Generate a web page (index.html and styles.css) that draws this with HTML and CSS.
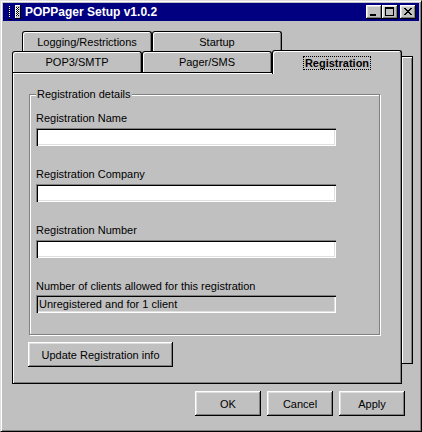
FILE: index.html
```html
<!DOCTYPE html>
<html lang="en">
<head>
  <meta charset="UTF-8" />
  <title>POPPager Setup v1.0.2</title>
  <link rel="stylesheet" href="styles.css">
</head>
<body>
  <div class="window">
    <div class="titlebar">
      <svg class="app-icon" viewBox="0 0 16 16" width="16" height="16" shape-rendering="crispEdges">
        <!-- antenna -->
        <rect x="4" y="2" width="1" height="1" fill="#fff"/>
        <rect x="4" y="3" width="1" height="1" fill="#000"/>
        <rect x="4" y="4" width="1" height="1" fill="#fff"/>
        <rect x="4" y="5" width="1" height="1" fill="#000"/>
        <rect x="4" y="6" width="1" height="1" fill="#fff"/>
        <rect x="4" y="7" width="1" height="1" fill="#000"/>
        <rect x="4" y="8" width="1" height="1" fill="#fff"/>
        <rect x="4" y="9" width="1" height="1" fill="#000"/>
        <rect x="4" y="10" width="1" height="1" fill="#fff"/>
        <rect x="4" y="11" width="1" height="1" fill="#000"/>
        <rect x="4" y="12" width="1" height="1" fill="#fff"/>
        <rect x="3" y="15" width="4" height="1" fill="#000"/>
        <!-- pager body -->
        <rect x="10" y="1" width="6" height="14" fill="#000"/>
        <rect x="10" y="1" width="5" height="13" fill="#fff"/>
        <rect x="11" y="2" width="4" height="12" fill="#c0c0c0"/>
        <rect x="11" y="3" width="3" height="9" fill="#fff"/>
        <path d="M11 3h1v1h-1zM13 3h1v1h-1zM12 4h1v1h-1zM11 5h1v1h-1zM13 5h1v1h-1zM12 6h1v1h-1zM11 7h1v1h-1zM13 7h1v1h-1zM12 8h1v1h-1zM11 9h1v1h-1zM13 9h1v1h-1zM12 10h1v1h-1zM11 11h1v1h-1zM13 11h1v1h-1z" fill="#000"/>
      </svg>
      <span class="title">POPPager Setup v1.0.2</span>
      <div class="caption-btns">
        <button class="cap">
          <svg width="16" height="14" shape-rendering="crispEdges"><rect x="4" y="9" width="6" height="2" fill="#000"/></svg>
        </button>
        <button class="cap">
          <svg width="16" height="14" shape-rendering="crispEdges"><path d="M3 2h9v9H3zM4 4v6h7V4z" fill="#000" fill-rule="evenodd"/></svg>
        </button>
        <button class="cap close">
          <svg width="16" height="14" shape-rendering="crispEdges"><path transform="translate(4 3)" d="M0 0h2v1H0zM6 0h2v1H6zM1 1h2v1H1zM5 1h2v1H5zM2 2h4v1H2zM3 3h2v1H3zM2 4h4v1H2zM1 5h2v1H1zM5 5h2v1H5zM0 6h2v1H0zM6 6h2v1H6z" fill="#000"/></svg>
        </button>
      </div>
    </div>

    <div class="dialog">
      <div class="sheet">
        <div class="sheet-main">
          <div class="tab-row back">
            <div class="tab">Logging/Restrictions</div>
            <div class="tab">Startup</div>
          </div>
          <div class="tab-row front">
            <div class="tab">POP3/SMTP</div>
            <div class="tab">Pager/SMS</div>
            <div class="tab active"><span class="focus">Registration</span></div>
          </div>
          <div class="panel">
            <div class="group">
              <span class="legend">Registration details</span>
              <label class="lbl">Registration Name</label>
              <input class="field" type="text" />
              <label class="lbl">Registration Company</label>
              <input class="field" type="text" />
              <label class="lbl">Registration Number</label>
              <input class="field" type="text" />
              <label class="lbl tight">Number of clients allowed for this registration</label>
              <div class="field readonly">Unregistered and for 1 client</div>
            </div>
            <button class="btn update">Update Registration info</button>
          </div>
        </div>
        <div class="back-page"></div>
      </div>

      <div class="actions">
        <button class="btn">OK</button>
        <button class="btn">Cancel</button>
        <button class="btn">Apply</button>
      </div>
    </div>
  </div>
</body>
</html>
```

FILE: styles.css
```css
* { box-sizing: border-box; }
body {
  margin: 0;
  background-color: #c0c0c0;
  font-family: "Liberation Sans", Arial, sans-serif;
  font-size: 11px;
  color: #000;
}
.window {
  width: 422px; height: 432px;
  background-color: #c0c0c0;
  border: 1px solid; border-color: #dfdfdf #000 #000 #dfdfdf;
  box-shadow: inset 1px 1px #fff, inset -1px -1px #808080;
  padding: 2px;
}
.titlebar {
  height: 18px; background-color: #000080; color: #fff;
  display: flex; align-items: center; padding: 0 3px 0 2px;
}
.app-icon { flex: none; margin-right: 4px; }
.title { flex: 1; font-weight: bold; font-size: 12px; white-space: nowrap; }
.caption-btns { display: flex; }
.cap {
  width: 16px; height: 14px; padding: 0; border: none;
  background-color: #c0c0c0; display: block;
  box-shadow: inset -1px -1px #000, inset 1px 1px #fff, inset -2px -2px #808080, inset 2px 2px #dfdfdf;
}
.cap svg { display: block; }
.cap.close { margin-left: 2px; }

.dialog { padding: 10px 0 0 9px; }
.sheet { display: flex; align-items: flex-start; }
.sheet-main { width: 390px; flex: none; }
.tab-row { display: flex; }
.tab-row.back { margin-left: 10px; height: 20px; }
.tab-row.front { height: 21px; }
.tab {
  width: 130px; height: 100%;
  display: flex; align-items: center; justify-content: center;
  border: 1px solid #000; border-bottom: none;
  border-radius: 3px 3px 0 0;
  box-shadow: inset 1px 1px #fff, inset -1px 0 #808080;
  background-color: #c0c0c0;
}
.tab.active {
  height: 24px; margin-top: -1px;
  position: relative; z-index: 1;
  font-weight: bold;
}
.focus { outline: 1px dotted #000; padding: 0 1px; line-height: 12px; }

.panel {
  height: 312px;
  border: 1px solid #000;
  box-shadow: inset 1px 1px #fff, inset -1px -1px #808080;
  padding: 21px 0 0 15px;
}
.group {
  position: relative;
  width: 351px; height: 241px; margin-left: 1px;
  border: 1px solid #808080;
  box-shadow: 1px 1px #fff, inset 1px 1px #fff;
  padding: 17px 0 0 6px;
}
.legend {
  position: absolute; top: -7px; left: 6px;
  padding: 0 1px; line-height: 13px;
  background-color: #c0c0c0;
}
.lbl { display: block; line-height: 13px; margin-bottom: 3px; }
.lbl.tight { margin-bottom: 2px; }
.field {
  display: block; width: 300px; height: 18px; margin: 0 0 22px 0;
  border: none; background-color: #fff; outline: none;
  font: inherit; padding: 0 3px; line-height: 18px;
  box-shadow: inset 1px 1px #808080, inset 2px 2px #000, inset -1px -1px #fff, inset -2px -2px #dfdfdf;
}
.field.readonly { background-color: #c0c0c0; margin-bottom: 0; }

.btn {
  background-color: #c0c0c0; border: none; padding: 0;
  font-family: inherit; font-size: 11px; color: #000;
  box-shadow: inset -1px -1px #000, inset 1px 1px #fff, inset -2px -2px #808080, inset 2px 2px #dfdfdf;
}
.btn.update { display: block; width: 145px; height: 25px; margin-top: 7px; }

.back-page {
  width: 11px; height: 308px; margin-top: 25px;
  border: 1px solid #000; border-left: none;
  box-shadow: inset 1px 1px #fff, inset -1px 0 #808080;
}

.actions {
  display: flex; justify-content: flex-end; gap: 6px;
  margin-top: 7px; padding-right: 14px;
}
.actions .btn { width: 66px; height: 25px; }
```
